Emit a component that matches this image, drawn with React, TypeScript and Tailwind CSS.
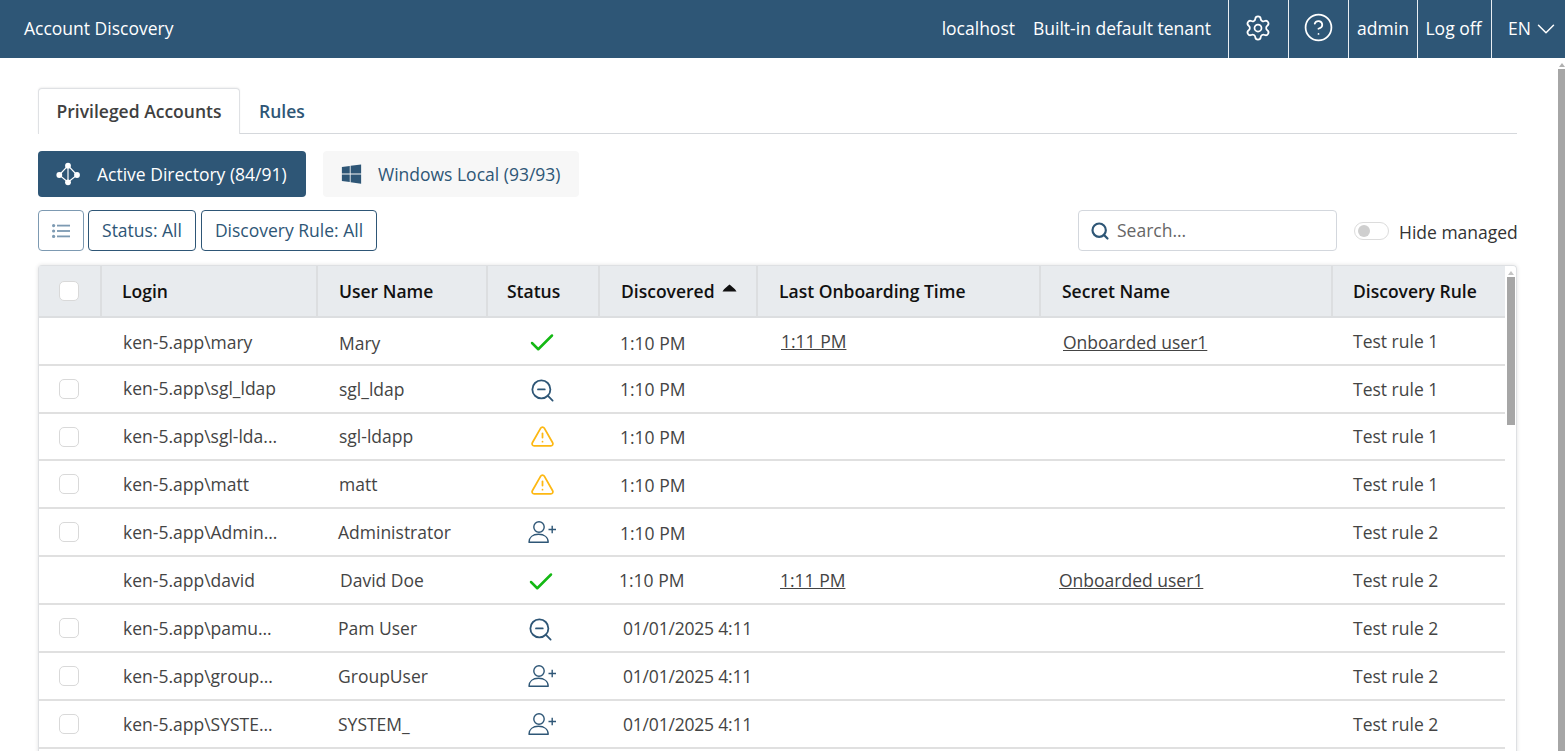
import { Check, ChevronDown, CircleHelp, Search, Settings, TriangleAlert, ZoomOut } from "lucide-react";
import { FaWindows } from "react-icons/fa";

const GRID = "grid grid-cols-[63px_216px_170px_112px_158px_283px_292px_172px]";

type Status = "ok" | "zoom" | "warn" | "add";

type Row = {
  login: string;
  name: string;
  status: Status;
  time: string;
  link?: string;
  secret?: string;
  rule: string;
  noCheck?: boolean;
  loginPad?: string;
  namePad?: string;
  statusPad?: string;
  timePad?: string;
  linkPad?: string;
  secretPad?: string;
  height?: string;
};

const DATE_PAD = "pl-[23px] tracking-[-0.2px]";

const rows: Row[] = [
  { login: "ken-5.app\\mary", name: "Mary", status: "ok", time: "1:10 PM", link: "1:11 PM", secret: "Onboarded user1", rule: "Test rule 1", noCheck: true, loginPad: "pl-[21px] pt-[2px]", namePad: "pl-[21px] pt-[4px]", statusPad: "pr-[5px]", timePad: "pl-[20px] pt-[4px]", secretPad: "pl-[22px] pt-[2px]" },
  { login: "ken-5.app\\sgl_ldap", name: "sgl_ldap", status: "zoom", time: "1:10 PM", rule: "Test rule 1", loginPad: "pl-[21px] pb-[2px]" },
  { login: "ken-5.app\\sgl-lda...", name: "sgl-ldapp", status: "warn", time: "1:10 PM", rule: "Test rule 1", height: "h-[47px]", timePad: "pl-[20px] pt-[2px]" },
  { login: "ken-5.app\\matt", name: "matt", status: "warn", time: "1:10 PM", rule: "Test rule 1", timePad: "pl-[20px] pt-[2px]" },
  { login: "ken-5.app\\Admin...", name: "Administrator", status: "add", time: "1:10 PM", rule: "Test rule 2", namePad: "pl-[20px]", timePad: "pl-[20px] pt-[2px]" },
  { login: "ken-5.app\\david", name: "David Doe", status: "ok", time: "1:10 PM", link: "1:11 PM", secret: "Onboarded user1", rule: "Test rule 2", noCheck: true, namePad: "pl-[22px]", statusPad: "pr-[6px]", timePad: "pl-[19px]", linkPad: "pl-[22px]", secretPad: "pl-[18px]" },
  { login: "ken-5.app\\pamu...", name: "Pam User", status: "zoom", time: "01/01/2025 4:11", rule: "Test rule 2", namePad: "pl-[20px]", statusPad: "pr-[7px]", timePad: DATE_PAD },
  { login: "ken-5.app\\group...", name: "GroupUser", status: "add", time: "01/01/2025 4:11", rule: "Test rule 2", namePad: "pl-[20px]", timePad: DATE_PAD },
  { login: "ken-5.app\\SYSTE...", name: "SYSTEM_", status: "add", time: "01/01/2025 4:11", rule: "Test rule 2", namePad: "pl-[20px]", timePad: DATE_PAD },
  { login: "", name: "", status: "add", time: "", rule: "", noCheck: true },
];

function NetworkIcon() {
  return (
    <svg width="24" height="24" viewBox="0 0 24 24" fill="none" stroke="white" strokeWidth="1.2">
      <path d="M12 3.7 3.3 13l8.7 7.3 9-7.3z" />
      <path d="M12 3.7v16.6" />
      <g fill="white" stroke="none">
        <circle cx="12" cy="3.7" r="2.9" />
        <circle cx="3.3" cy="13" r="2.9" />
        <circle cx="21" cy="13" r="2.9" />
        <circle cx="12" cy="20.3" r="2.9" />
      </g>
    </svg>
  );
}

function UserAddIcon() {
  return (
    <svg width="29" height="24" viewBox="0 0 29 24" fill="none" stroke="#2e5676" strokeWidth="1.4">
      <circle cx="11" cy="7" r="5.2" />
      <path d="M1 22.3c0-5 3.8-8 9.5-8s9.7 3 9.7 8z" strokeLinejoin="round" />
      <path d="M20.5 9.5h7.5M24.2 5.8v7.5" />
    </svg>
  );
}

function StatusIcon({ status }: { status: Status }) {
  if (status === "ok") return <Check className="mt-[4px] h-[30px] w-[30px] text-[#14b814]" strokeWidth={2} />;
  if (status === "zoom") return <ZoomOut className="mt-[2px] h-[27px] w-[27px] text-[#2e5676]" strokeWidth={1.6} />;
  if (status === "warn") return <TriangleAlert className="h-[25px] w-[25px] text-[#fdb813]" strokeWidth={1.7} />;
  return <UserAddIcon />;
}

function HeaderCell({ label, pad = "pl-[21px]", sep = true, children }: { label: string; pad?: string; sep?: boolean; children?: React.ReactNode }) {
  return (
    <div className={`flex items-center font-semibold text-[#111] ${pad} ${sep ? "border-r-[2px] border-[#dcdee0]" : ""}`}>
      {label}
      {children}
    </div>
  );
}

function Checkbox() {
  return <div className="ml-[20px] h-[20px] w-[20px] rounded-[5px] border border-[#d9d9d9] bg-white" />;
}

function TableRow({ row }: { row: Row }) {
  return (
    <div className={`${GRID} items-center border-b-[2px] border-[#e0e0e0] text-[#444] ${row.height ?? "h-[48px]"}`}>
      <div>{!row.noCheck && <Checkbox />}</div>
      <div className={`whitespace-nowrap ${row.loginPad ?? "pl-[21px]"}`}>{row.login}</div>
      <div className={row.namePad ?? "pl-[21px]"}>{row.name}</div>
      <div className={`flex justify-center ${row.statusPad ?? "pr-[3px]"}`}>{row.login && <StatusIcon status={row.status} />}</div>
      <div className={`whitespace-nowrap ${row.timePad ?? "pl-[20px]"}`}>{row.time}</div>
      <div className={row.linkPad ?? "pl-[23px]"}>{row.link && <span className="underline">{row.link}</span>}</div>
      <div className={row.secretPad ?? "pl-[22px]"}>{row.secret && <span className="underline">{row.secret}</span>}</div>
      <div className="pl-[20px]">{row.rule}</div>
    </div>
  );
}

export default function App() {
  return (
    <div className="flex h-[751px] flex-col overflow-hidden bg-white font-['Open_Sans',sans-serif] text-[17.5px]">
      <header className="flex h-[58px] shrink-0 items-center bg-[#2e5676] text-white">
        <div className="pb-[2px] pl-[24px]">Account Discovery</div>
        <div className="ml-auto pb-[2px] pr-[18px]">localhost</div>
        <div className="pb-[2px] pr-[17px]">Built-in default tenant</div>
        <div className="flex h-full w-[60px] items-center justify-center border-l border-[#e8eef3] pb-[3px] pr-[2px]">
          <Settings className="h-[28px] w-[28px]" strokeWidth={1.5} />
        </div>
        <div className="flex h-full w-[60px] items-center justify-center border-l border-[#e8eef3] pb-[4px]">
          <CircleHelp className="h-[31px] w-[31px]" strokeWidth={1.35} />
        </div>
        <div className="flex h-full w-[69px] items-center justify-center border-l border-[#e8eef3] pb-[2px]">admin</div>
        <div className="flex h-full w-[74px] items-center justify-center border-l border-[#e8eef3] pb-[2px] pr-[2px]">Log off</div>
        <div className="flex h-full w-[74px] items-center border-l border-[#e8eef3] pl-[16px]">
          <span className="pb-[2px]">EN</span>
          <ChevronDown className="h-[30px] w-[30px]" strokeWidth={1.2} />
        </div>
      </header>

      <div className="flex min-h-0 flex-1">
        <main className="min-w-0 flex-1 pl-[38px] pr-[41px] pt-[30px]">
          <div className="flex h-[46px] border-b border-[#d5d8dc]">
            <div className="flex h-[46px] w-[202px] items-center justify-center rounded-t-[4px] border border-b-0 border-[#dfe1e4] bg-white font-semibold text-[#404040] shadow-[0_-1px_2px_rgba(0,0,0,0.06)]">
              Privileged Accounts
            </div>
            <div className="flex items-center pl-[19px] pt-[2px] font-semibold text-[#2e5676]">Rules</div>
          </div>

          <div className="mt-[17px] flex gap-[17px]">
            <div className="flex h-[46px] w-[268px] items-center gap-[17px] rounded-[4px] bg-[#2e5676] pl-[18px] text-white">
              <NetworkIcon />
              Active Directory (84/91)
            </div>
            <div className="flex h-[46px] w-[256px] items-center gap-[16px] rounded-[4px] bg-[#f7f7f7] pl-[18px] text-[#2e5676]">
              <FaWindows className="h-[22px] w-[21px]" />
              Windows Local (93/93)
            </div>
          </div>

          <div className="mt-[13px] flex h-[41px] items-center">
            <div className="flex h-[41px] w-[46px] items-center justify-center rounded-[4px] border border-[#7d9ab2]">
              <svg width="18" height="14" viewBox="0 0 18 14" fill="#7d9ab2">
                <circle cx="1.6" cy="1.6" r="1.6" />
                <circle cx="1.6" cy="7" r="1.6" />
                <circle cx="1.6" cy="12.4" r="1.6" />
                <rect x="5" y="0.7" width="13" height="1.8" />
                <rect x="5" y="6.1" width="13" height="1.8" />
                <rect x="5" y="11.5" width="13" height="1.8" />
              </svg>
            </div>
            <div className="ml-[4px] flex h-[41px] w-[108px] items-center justify-center rounded-[4px] border border-[#2e5676] text-[#2e5676]">Status: All</div>
            <div className="ml-[5px] flex h-[41px] w-[176px] items-center justify-center rounded-[4px] border border-[#2e5676] text-[#2e5676]">Discovery Rule: All</div>
            <div className="ml-auto flex h-[41px] w-[259px] items-center gap-[7px] rounded-[4px] border border-[#d3d7dd] pl-[11px] text-[#666]">
              <Search className="h-[20px] w-[20px] text-[#2e5676]" strokeWidth={2.6} />
              Search...
            </div>
            <div className="ml-[17px] flex h-[18px] w-[35px] items-center rounded-full border border-[#dcdcdc] pl-[3px]">
              <div className="h-[12px] w-[12px] rounded-full bg-[#cfcfcf]" />
            </div>
            <div className="ml-[10px] w-[118px] whitespace-nowrap pt-[4px] text-[#333]">Hide managed</div>
          </div>

          <div className="mt-[14px] flex rounded-t-[4px] border-l border-r border-t border-[#dee0e3] shadow-[0_0_4px_rgba(0,0,0,0.12)]">
            <div className="min-w-0 flex-1">
              <div className={`${GRID} h-[52px] border-b-[2px] border-[#dcdee0] bg-[#e8ebee]`}>
                <div className="flex items-center border-r-[2px] border-[#dcdee0]">
                  <Checkbox />
                </div>
                <HeaderCell label="Login" pad="pl-[20px]" />
                <HeaderCell label="User Name" />
                <HeaderCell label="Status" pad="pl-[19px]" />
                <HeaderCell label="Discovered">
                  <svg className="ml-[7px] mb-[6px]" width="15" height="8" viewBox="0 0 15 8" fill="#111">
                    <path d="M7.5 0.5C9 2 13 4.5 14.5 7.5H0.5C2 4.5 6 2 7.5 0.5z" />
                  </svg>
                </HeaderCell>
                <HeaderCell label="Last Onboarding Time" />
                <HeaderCell label="Secret Name" />
                <HeaderCell label="Discovery Rule" pad="pl-[20px]" sep={false} />
              </div>
              {rows.map((row, i) => (
                <TableRow key={i} row={row} />
              ))}
            </div>
            <div className="flex w-[11px] shrink-0 flex-col items-center pt-[5px]">
              <div className="h-0 w-0 border-x-[3px] border-b-[4px] border-x-transparent border-b-[#c4c4c4]" />
              <div className="mt-[2px] h-[148px] w-[8px] bg-[#a6a6a6]" />
            </div>
          </div>
        </main>

        <div className="flex w-[7px] shrink-0 flex-col items-center pt-[5px]">
          <div className="h-0 w-0 border-x-[3px] border-b-[4px] border-x-transparent border-b-[#b0b0b0]" />
          <div className="mt-[2px] h-[700px] w-[7px] bg-[#a6a6a6]" />
        </div>
      </div>
    </div>
  );
}
